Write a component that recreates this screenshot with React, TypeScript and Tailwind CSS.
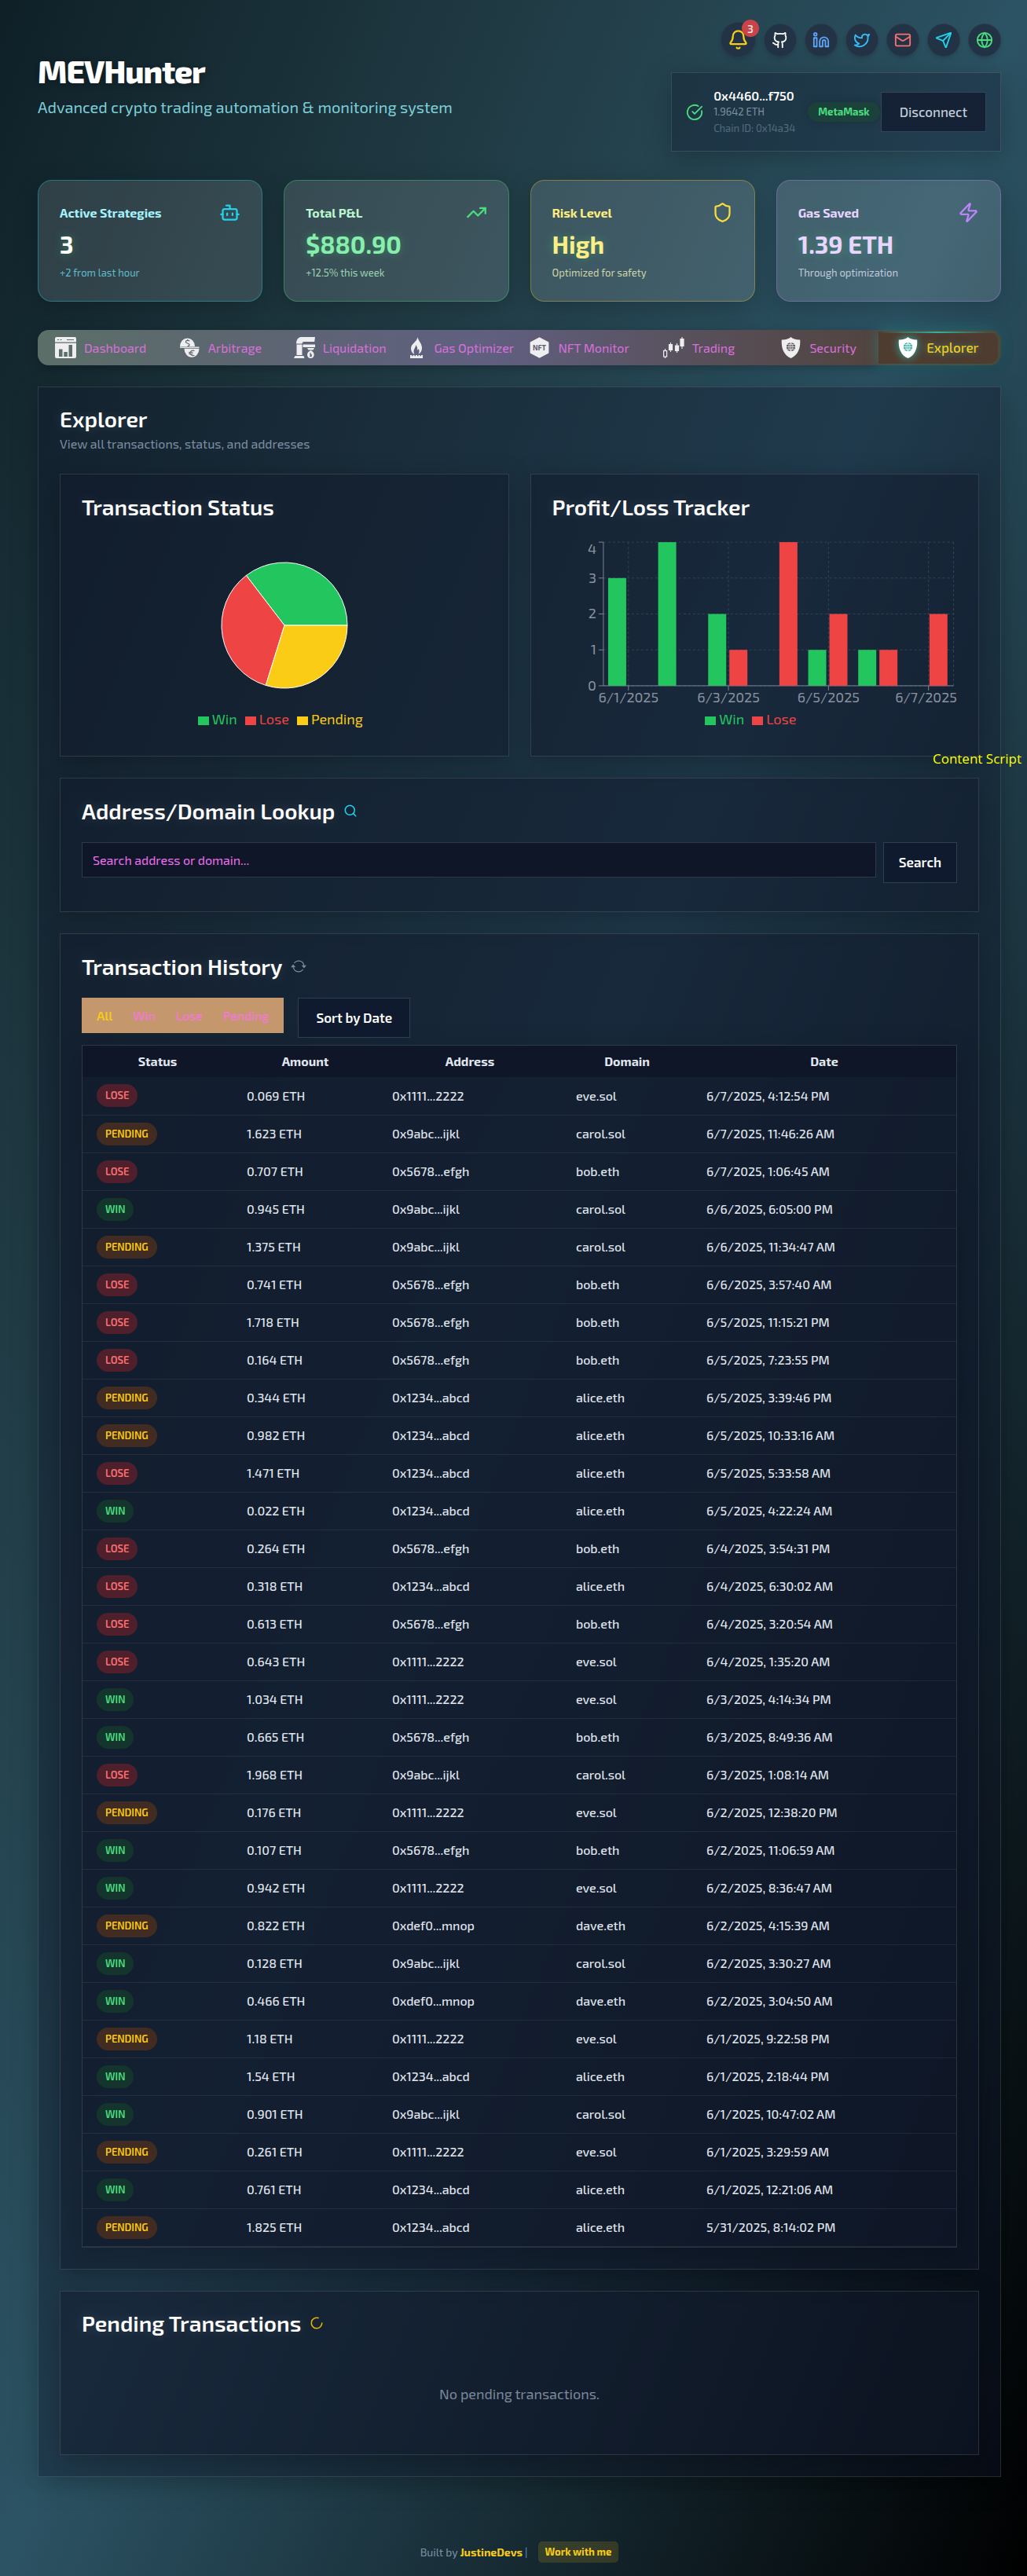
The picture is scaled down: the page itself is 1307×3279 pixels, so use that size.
import type { ReactNode } from "react";
import {
  Bell,
  Bot,
  CircleCheckBig,
  Github,
  Globe,
  Linkedin,
  LoaderCircle,
  Mail,
  Search,
  Send,
  Shield,
  TrendingUp,
  Twitter,
  Zap,
} from "lucide-react";
import { BsArrowRepeat } from "react-icons/bs";

type Status = "WIN" | "LOSE" | "PENDING";

const addresses: Record<string, string> = {
  "eve.sol": "0x1111...2222",
  "carol.sol": "0x9abc...ijkl",
  "bob.eth": "0x5678...efgh",
  "alice.eth": "0x1234...abcd",
  "dave.eth": "0xdef0...mnop",
};

const transactions: [Status, string, string, string][] = [
  ["LOSE", "0.069", "eve.sol", "6/7/2025, 4:12:54 PM"],
  ["PENDING", "1.623", "carol.sol", "6/7/2025, 11:46:26 AM"],
  ["LOSE", "0.707", "bob.eth", "6/7/2025, 1:06:45 AM"],
  ["WIN", "0.945", "carol.sol", "6/6/2025, 6:05:00 PM"],
  ["PENDING", "1.375", "carol.sol", "6/6/2025, 11:34:47 AM"],
  ["LOSE", "0.741", "bob.eth", "6/6/2025, 3:57:40 AM"],
  ["LOSE", "1.718", "bob.eth", "6/5/2025, 11:15:21 PM"],
  ["LOSE", "0.164", "bob.eth", "6/5/2025, 7:23:55 PM"],
  ["PENDING", "0.344", "alice.eth", "6/5/2025, 3:39:46 PM"],
  ["PENDING", "0.982", "alice.eth", "6/5/2025, 10:33:16 AM"],
  ["LOSE", "1.471", "alice.eth", "6/5/2025, 5:33:58 AM"],
  ["WIN", "0.022", "alice.eth", "6/5/2025, 4:22:24 AM"],
  ["LOSE", "0.264", "bob.eth", "6/4/2025, 3:54:31 PM"],
  ["LOSE", "0.318", "alice.eth", "6/4/2025, 6:30:02 AM"],
  ["LOSE", "0.613", "bob.eth", "6/4/2025, 3:20:54 AM"],
  ["LOSE", "0.643", "eve.sol", "6/4/2025, 1:35:20 AM"],
  ["WIN", "1.034", "eve.sol", "6/3/2025, 4:14:34 PM"],
  ["WIN", "0.665", "bob.eth", "6/3/2025, 8:49:36 AM"],
  ["LOSE", "1.968", "carol.sol", "6/3/2025, 1:08:14 AM"],
  ["PENDING", "0.176", "eve.sol", "6/2/2025, 12:38:20 PM"],
  ["WIN", "0.107", "bob.eth", "6/2/2025, 11:06:59 AM"],
  ["WIN", "0.942", "eve.sol", "6/2/2025, 8:36:47 AM"],
  ["PENDING", "0.822", "dave.eth", "6/2/2025, 4:15:39 AM"],
  ["WIN", "0.128", "carol.sol", "6/2/2025, 3:30:27 AM"],
  ["WIN", "0.466", "dave.eth", "6/2/2025, 3:04:50 AM"],
  ["PENDING", "1.18", "eve.sol", "6/1/2025, 9:22:58 PM"],
  ["WIN", "1.54", "alice.eth", "6/1/2025, 2:18:44 PM"],
  ["WIN", "0.901", "carol.sol", "6/1/2025, 10:47:02 AM"],
  ["PENDING", "0.261", "eve.sol", "6/1/2025, 3:29:59 AM"],
  ["WIN", "0.761", "alice.eth", "6/1/2025, 12:21:06 AM"],
  ["PENDING", "1.825", "alice.eth", "5/31/2025, 8:14:02 PM"],
];

const badgeStyles: Record<Status, string> = {
  WIN: "bg-[#14352c] text-[#4ade80]",
  LOSE: "bg-[#4f1f2b] text-[#f87171]",
  PENDING: "bg-[#422c21] text-[#facc15]",
};

const DashboardIcon = () => (
  <svg viewBox="0 0 27 27" className="size-[27px]" fill="currentColor" aria-hidden="true">
    <path
      fillRule="evenodd"
      d="M2 0h23a2 2 0 0 1 2 2v4.400H0V2a2 2 0 0 1 2-2ZM3 3v1h2V3Zm3.500 0v1h2V3ZM15 3v1h9V3ZM0 7.800h27V25a2 2 0 0 1-2 2H2a2 2 0 0 1-2-2ZM5 15.500V25h4.500v-9.500Zm6.300 3.500v6h4.500v-6Zm6.200-9v15H22V10Z"
    />
  </svg>
);

const ArbitrageIcon = () => (
  <svg viewBox="0 0 27 27" className="size-[27px]" aria-hidden="true">
    <path d="M1 12a9.500 10.500 0 0 1 19 0Z" fill="currentColor" />
    <path d="M1 13.200h24.500" stroke="currentColor" strokeWidth="1.400" />
    <path d="M6.500 14.800h19a9.500 11 0 0 1-19 0Z" fill="currentColor" />
    <path
      d="M13.200 5.200C12.500 4 8.300 4 8.300 6.200c0 2.100 4.800 1.500 4.800 3.700 0 1.200-1.300 1.700-2.600 1.700M10.600 3v1.500M19.500 17.500c-3.500-1.200-5.500 1-5.500 3s2.500 4 5.500 2.700M12 19.500h5.500M12 21.500h5.500"
      fill="none"
      stroke="#5d6770"
      strokeWidth="1.200"
    />
  </svg>
);

const LiquidationIcon = () => (
  <svg viewBox="0 0 27 27" className="size-[27px]" fill="currentColor" aria-hidden="true">
    <path d="M9 0h18l-.8 6H13c-1.600 0-2.500 1-2.500 2.500H3C3 4 5 .500 9 0ZM3.500 9.500h7V23h-7ZM1.500 24h11l1 3H0ZM11.500 9.500H27V13H11.500ZM17 14h9l-1.500 2.500h-6Z" />
    <path
      fillRule="evenodd"
      d="M21.500 17c2.500 1 4.200 3 4.200 5.500S24 27 21.300 27 17 25 17 22.500s1.800-4.500 4.500-5.500Zm-.200 2.500-1.400 2.500 1 .7-1 2.300 2.600.3.600-2.800-1.200-.6Z"
    />
  </svg>
);

const GasIcon = () => (
  <svg viewBox="0 0 27 27" className="size-[27px]" fill="currentColor" aria-hidden="true">
    <path d="M15.500 0c.5 4.500 5.500 8 5.500 14 0 3.500-1.700 6.500-4.500 8 1.300-2.500 1.400-5 .2-7-.5 1-1 1.500-1.700 1.700.5-2.700-.2-5-2-6.700.3 3.500-2.500 5-2.500 8.500 0 1.300.3 2.500 1 3.500-3-1.500-4.500-4.300-4.500-7.500C7 8.500 14.500 6.500 15.500 0ZM6 23h2v1.200h1.500V23h2v1.200H13V23h2v1.200h1.500V23h2v1.200H20V23h2v4H6Z" />
  </svg>
);

const NftIcon = () => (
  <svg viewBox="0 0 27 27" className="size-[27px]" aria-hidden="true">
    <path
      d="M13.500 1.200 24.500 7v13L13.500 25.800 2.500 20V7Z"
      fill="currentColor"
      stroke="currentColor"
      strokeWidth="1.800"
      strokeLinejoin="round"
    />
    <text x="13.500" y="16.800" textAnchor="middle" className="fill-[#5b5970] text-[9px] font-bold">
      NFT
    </text>
  </svg>
);

const TradingIcon = () => (
  <svg viewBox="0 0 27 27" className="size-[27px]" fill="none" stroke="currentColor" aria-hidden="true">
    <path d="M2.500 15v2.500M2.500 25v2M9.500 7v12M17.500 8v12M24 0v15" strokeWidth="1.100" />
    <rect x=".6" y="17.500" width="4" height="7.500" strokeWidth="1.200" />
    <path d="M9.500 9v8M17.500 10.500v7.500M24 2v10" strokeWidth="5.200" />
  </svg>
);

const ShieldGlobeIcon = ({ globe }: { globe: string }) => (
  <svg viewBox="0 0 27 27" className="size-[27px]" fill="none" aria-hidden="true">
    <path
      d="M13.500 0C16 2.200 20 3.700 25.200 3.500c.8 11-3 20-11.700 23.500C4.800 23.500 1 14.500 1.800 3.500 7 3.700 11 2.200 13.500 0Z"
      fill="currentColor"
    />
    <circle cx="13.500" cy="12.500" r="5.600" className={globe} />
    <path
      d="M13.500 7v11M8 12.500h11M9 9.700h9M9 15.300h9M13.500 7c-3.400 3-3.400 8 0 11M13.500 7c3.400 3 3.400 8 0 11"
      stroke="currentColor"
      strokeWidth=".8"
    />
  </svg>
);

const tabs: { label: string; icon: ReactNode }[] = [
  { label: "Dashboard", icon: <DashboardIcon /> },
  { label: "Arbitrage", icon: <ArbitrageIcon /> },
  { label: "Liquidation", icon: <LiquidationIcon /> },
  { label: "Gas Optimizer", icon: <GasIcon /> },
  { label: "NFT Monitor", icon: <NftIcon /> },
  { label: "Trading", icon: <TradingIcon /> },
  { label: "Security", icon: <ShieldGlobeIcon globe="fill-[#544a4c]" /> },
];

const socials: { label: string; icon: ReactNode }[] = [
  { label: "GitHub", icon: <Github className="size-[22px] text-white" /> },
  { label: "LinkedIn", icon: <Linkedin className="size-[22px] text-[#60a5fa]" /> },
  { label: "Twitter", icon: <Twitter className="size-[22px] text-[#38bdf8]" /> },
  { label: "Email", icon: <Mail className="size-[22px] text-[#f87171]" /> },
  { label: "Telegram", icon: <Send className="size-[22px] text-[#22d3ee]" /> },
  { label: "Website", icon: <Globe className="size-[22px] text-[#4ade80]" /> },
];

function StatCard(props: {
  title: string;
  value: string;
  note: string;
  icon: ReactNode;
  border: string;
  titleColor: string;
  valueColor: string;
  noteColor: string;
}) {
  return (
    <div
      className={`flex flex-col gap-[9px] rounded-[18px] border bg-white/12 p-[27px] shadow-[0_8px_32px_rgba(0,0,0,0.2)] ${props.border}`}
    >
      <div className="flex h-[27px] items-center justify-between">
        <h2 className={`text-[16px] font-bold ${props.titleColor}`}>{props.title}</h2>
        {props.icon}
      </div>
      <p
        className={`text-[31px] leading-[36px] font-bold [text-shadow:0_0_12px_rgba(74,222,128,0.35)] ${props.valueColor}`}
      >
        {props.value}
      </p>
      <p className={`text-[13px] leading-[18px] ${props.noteColor}`}>{props.note}</p>
    </div>
  );
}

function Panel({ title, icon, children }: { title: string; icon?: ReactNode; children: ReactNode }) {
  return (
    <section className="border border-white/12 bg-[#0f172a]/50 p-[27px] shadow-[0_8px_32px_rgba(0,0,0,0.25)]">
      <h2 className="mb-[27px] flex h-[27px] items-center gap-[11px] text-[28px] font-semibold text-white [text-shadow:0_0_16px_rgba(255,255,255,0.15)]">
        {title}
        {icon}
      </h2>
      {children}
    </section>
  );
}

function Legend({ items }: { items: [string, string, string][] }) {
  return (
    <ul className="flex justify-center text-[18px] leading-[27px]">
      {items.map(([label, swatch, text]) => (
        <li key={label} className={`mr-[10px] flex items-center gap-1 ${text}`}>
          <span className={`mt-[3px] h-[11px] w-[14px] ${swatch}`} />
          {label}
        </li>
      ))}
    </ul>
  );
}

const slices = [
  { share: 35.4, color: "#22c55e" },
  { share: 34.8, color: "#ef4444" },
  { share: 29.8, color: "#facc15" },
];

function PieChart() {
  let start = 0;
  return (
    <svg viewBox="0 0 164 164" className="size-[164px]" role="img" aria-label="Win, lose and pending shares">
      {slices.map((s) => {
        const end = start + (s.share / 100) * Math.PI * 2;
        const point = (a: number) => `${82 + 80 * Math.cos(a)},${82 - 80 * Math.sin(a)}`;
        const d = `M82,82L${point(start)}A80,80,0,0,0,${point(end)}Z`;
        start = end;
        return <path key={s.color} d={d} fill={s.color} stroke="#fff" />;
      })}
    </svg>
  );
}

const days: [number, number][] = [
  [3, 0],
  [4, 0],
  [2, 1],
  [0, 4],
  [1, 2],
  [1, 1],
  [0, 2],
];

function BarChart() {
  const left = 65;
  const right = 511;
  const base = 188;
  const unit = 183 / 4;
  const band = (right - left) / days.length;
  return (
    <svg viewBox="0 0 516 220" className="h-[220px] w-full" role="img" aria-label="Wins and losses per day">
      <g stroke="#334155" strokeDasharray="3 3">
        {[0, 1, 2, 3, 4].map((v) => (
          <line key={v} x1={left} x2={right} y1={base - v * unit} y2={base - v * unit} />
        ))}
        {[0.5, 2.5, 4.5, 6.5, 7].map((i) => (
          <line key={i} x1={left + i * band} x2={left + i * band} y1={5} y2={base} />
        ))}
      </g>
      <g stroke="#7b8595">
        <line x1={left} x2={left} y1={5} y2={base} />
        <line x1={left} x2={right} y1={base} y2={base} />
        {[0, 1, 2, 3, 4].map((v) => (
          <line key={v} x1={left - 6} x2={left} y1={base - v * unit} y2={base - v * unit} />
        ))}
        {[0.5, 2.5, 4.5, 6.5].map((i) => (
          <line key={i} x1={left + i * band} x2={left + i * band} y1={base} y2={base + 6} />
        ))}
      </g>
      {days.map(([win, lose], i) => (
        <g key={i}>
          <rect x={left + i * band + 6} y={base - win * unit} width={23} height={win * unit} fill="#22c55e" />
          <rect x={left + i * band + 33} y={base - lose * unit} width={23} height={lose * unit} fill="#ef4444" />
        </g>
      ))}
      <g className="fill-[#8b93a1] text-[18px]">
        {[0, 1, 2, 3, 4].map((v) => (
          <text key={v} x={left - 9} y={v === 4 ? 20 : base - v * unit + 6} textAnchor="end">
            {v}
          </text>
        ))}
        {["6/1/2025", "6/3/2025", "6/5/2025", "6/7/2025"].map((d, i) => (
          <text key={d} x={i === 3 ? 476 : left + (i * 2 + 0.5) * band} y={209} textAnchor="middle">
            {d}
          </text>
        ))}
      </g>
    </svg>
  );
}

export default function App() {
  return (
    <div className="relative flex min-h-screen flex-col bg-[linear-gradient(to_bottom_right,#0f2027_0%,#203a43_25%,#2c5364_50%,#000_100%)] pt-7 pr-[33px] pb-[18px] pl-12 font-['Exo_2','Noto_Sans',sans-serif] text-white">
      <header className="flex items-center justify-between">
        <div className="pb-1">
          <h1 className="text-[40px] leading-[45px] font-extrabold tracking-tight [text-shadow:0_2px_8px_rgba(0,0,0,0.3)]">
            MEVHunter
          </h1>
          <p className="mt-[9px] text-[20px] leading-[28px] text-[#7fcfd8]">
            Advanced crypto trading automation &amp; monitoring system
          </p>
        </div>
        <div className="flex flex-col items-end gap-[19px]">
          <div className="flex items-center gap-[10px]">
            <button
              aria-label="Notifications"
              className="relative flex size-[45px] items-center justify-center rounded-full border border-[#2b3c4c] bg-[#213344] shadow-md"
            >
              <Bell className="size-[27px] text-[#facc15]" />
              <span className="absolute -top-1 -right-[5px] flex size-[22px] items-center justify-center rounded-full bg-[#c94449] text-[14px] font-semibold text-[#e5dede]">
                3
              </span>
            </button>
            {socials.map((s) => (
              <a
                key={s.label}
                href="#"
                aria-label={s.label}
                className="flex size-[42px] items-center justify-center rounded-full border border-[#2b3c4c] bg-[#213344] shadow-md"
              >
                {s.icon}
              </a>
            ))}
          </div>
          <div className="flex items-center border border-white/12 bg-[#0f172a]/35 p-[18px] shadow-[0_8px_32px_rgba(0,0,0,0.25)]">
            <CircleCheckBig className="mr-[13px] size-[22px] text-[#4ade80]" />
            <div className="mr-[16px] leading-[21px]">
              <p className="text-[16px] font-semibold">0x4460...f750</p>
              <p className="text-[13px] text-[#7f91a3]">1.9642 ETH</p>
              <p className="text-[13px] text-[#566a80]">Chain ID: 0x14a34</p>
            </div>
            <span className="mr-px rounded-full bg-[#1a423b] px-[13px] text-[13px] leading-[25px] font-bold text-[#4ade80] shadow-[0_0_12px_rgba(0,0,0,0.2)]">
              MetaMask
            </span>
            <button className="h-[51px] border border-[#34455a] bg-[#152236] px-[23px] text-[17px] font-medium text-[#c5cedb]">
              Disconnect
            </button>
          </div>
        </div>
      </header>

      <div className="mt-9 grid grid-cols-4 gap-[27px]">
        <StatCard
          title="Active Strategies"
          value="3"
          note="+2 from last hour"
          icon={<Bot className="size-[27px] text-[#22d3ee]" />}
          border="border-[#22d3ee]/35"
          titleColor="text-[#a5f3fc]"
          valueColor="text-white"
          noteColor="text-[#5fbdcb]"
        />
        <StatCard
          title="Total P&L"
          value="$880.90"
          note="+12.5% this week"
          icon={<TrendingUp className="size-[27px] text-[#4ade80]" />}
          border="border-[#4ade80]/35"
          titleColor="text-[#bbf7d0]"
          valueColor="text-[#86efac]"
          noteColor="text-[#9fd3b5]"
        />
        <StatCard
          title="Risk Level"
          value="High"
          note="Optimized for safety"
          icon={<Shield className="size-[27px] text-[#fbdc3c]" />}
          border="border-[#facc15]/35"
          titleColor="text-[#fdee7f]"
          valueColor="text-[#fdee85]"
          noteColor="text-[#cdd5aa]"
        />
        <StatCard
          title="Gas Saved"
          value="1.39 ETH"
          note="Through optimization"
          icon={<Zap className="size-[27px] text-[#c084fc]" />}
          border="border-[#c084fc]/35"
          titleColor="text-[#e9d5ff]"
          valueColor="text-[#e9d5ff]"
          noteColor="text-[#c2cbdc]"
        />
      </div>

      <nav className="mt-9 grid h-[45px] grid-cols-8 rounded-[14px] bg-[linear-gradient(to_right,#5b6f68,#5c6670_20%,#605f80_47%,#574f58_70%,#4d3b2b)] px-1 py-0.5 shadow-[0_4px_16px_rgba(0,0,0,0.25)]">
        {tabs.map((t) => (
          <button key={t.label} className="flex items-center justify-center gap-[10px] text-[16px] whitespace-nowrap text-[#db70dd]">
            <span className="shrink-0 text-[#eeeef0]">{t.icon}</span>
            {t.label}
          </button>
        ))}
        <button
          aria-current="page"
          className="relative flex items-center justify-center gap-[10px] rounded-r-xl bg-[#4f3c30] text-[17px] font-medium whitespace-nowrap text-[#facc15] shadow-[0_0_18px_rgba(32,178,170,0.4)]"
        >
          <span className="absolute inset-x-0 top-0 h-0.5 bg-linear-to-r from-transparent via-[#2fb0a8] to-transparent" />
          <span className="shrink-0 text-white drop-shadow-[0_0_6px_#2bb5aa]">
            <ShieldGlobeIcon globe="fill-[#2aa7a0]" />
          </span>
          <span className="[text-shadow:0_0_8px_rgba(45,212,191,0.6)]">Explorer</span>
        </button>
      </nav>

      <main className="mt-[27px] border border-white/12 bg-[#0f172a]/40 p-[27px] shadow-[0_8px_32px_rgba(0,0,0,0.25)]">
        <h1 className="text-[28px] leading-[27px] font-semibold [text-shadow:0_0_16px_rgba(255,255,255,0.15)]">Explorer</h1>
        <p className="mt-1 mb-[25px] text-[16px] leading-[27px] text-[#7f8fa3]">
          View all transactions, status, and addresses
        </p>

        <div className="flex flex-col gap-[27px]">
          <div className="grid grid-cols-2 gap-[27px]">
            <Panel title="Transaction Status">
              <div className="flex h-[250px] flex-col items-center justify-end">
                <PieChart />
                <div className="mt-6 pb-1.5">
                  <Legend
                    items={[
                      ["Win", "bg-[#22c55e]", "text-[#22c55e]"],
                      ["Lose", "bg-[#ef4444]", "text-[#ef4444]"],
                      ["Pending", "bg-[#facc15]", "text-[#facc15]"],
                    ]}
                  />
                </div>
              </div>
            </Panel>
            <Panel title="Profit/Loss Tracker">
              <div className="h-[250px]">
                <BarChart />
                <div className="-mt-[3px]">
                  <Legend
                    items={[
                      ["Win", "bg-[#22c55e]", "text-[#22c55e]"],
                      ["Lose", "bg-[#ef4444]", "text-[#ef4444]"],
                    ]}
                  />
                </div>
              </div>
            </Panel>
          </div>

          <Panel title="Address/Domain Lookup" icon={<Search className="size-[18px] text-[#22d3ee]" />}>
            <form className="mb-[9px] flex items-start gap-[9px]">
              <input
                type="text"
                aria-label="Search address or domain"
                placeholder="Search address or domain..."
                className="h-[45px] min-w-0 flex-1 border border-[#2b394b] bg-[#0e1628] px-[13px] text-[16px] placeholder:text-[#f06ff0] placeholder:opacity-100"
              />
              <button
                type="button"
                className="h-[52px] border border-[#2f3f52] bg-[#101a2e] px-[19px] text-[17px] font-semibold"
              >
                Search
              </button>
            </form>
          </Panel>

          <Panel title="Transaction History" icon={<BsArrowRepeat className="size-5 text-[#7b8a9e]" />}>
            <div className="mb-[9px] flex items-start gap-[18px]">
              <div className="flex h-[45px] items-center bg-[#c4976c] px-[6px] text-[16px] text-[#fb73ea]">
                <button className="px-[13px] font-semibold text-[#f6cb17]">All</button>
                <button className="px-[13px]">Win</button>
                <button className="px-[13px]">Lose</button>
                <button className="px-[13px]">Pending</button>
              </div>
              <button className="h-[51px] border border-[#2f3f52] bg-[#101a2e] px-[22px] text-[17px] font-semibold">
                Sort by Date
              </button>
            </div>
            <div className="border border-white/12 bg-[#0f172a]/50 shadow-[0_8px_32px_rgba(0,0,0,0.2)]">
              <table className="w-full table-fixed border-collapse text-[16px] text-[#e2e8f0]">
                <thead>
                  <tr className="h-10 bg-[#0e1628]">
                    <th className="w-[191px] font-bold">Status</th>
                    <th className="w-[185px] font-bold">Amount</th>
                    <th className="w-[234px] font-bold">Address</th>
                    <th className="w-[166px] font-bold">Domain</th>
                    <th className="font-bold">Date</th>
                  </tr>
                </thead>
                <tbody className="font-medium">
                  {transactions.map(([status, amount, domain, date]) => (
                    <tr key={date} className="h-12 border-b border-white/7">
                      <td className="px-[18px]">
                        <span
                          className={`inline-block rounded-full px-[11px] align-middle text-[13px] leading-[29px] font-semibold ${badgeStyles[status]}`}
                        >
                          {status}
                        </span>
                      </td>
                      <td className="px-[18px]">{amount} ETH</td>
                      <td className="px-[18px]">{addresses[domain]}</td>
                      <td className="px-[18px]">{domain}</td>
                      <td className="px-[18px]">{date}</td>
                    </tr>
                  ))}
                </tbody>
              </table>
            </div>
          </Panel>

          <Panel title="Pending Transactions" icon={<LoaderCircle className="size-[18px] text-[#eab308]" />}>
            <p className="py-9 text-center text-[18px] leading-[27px] text-[#7b899c]">No pending transactions.</p>
          </Panel>
        </div>
      </main>

      <footer className="mt-[82px] flex items-center justify-center text-[14px] text-[#7d93a8]">
        <span>
          Built by{" "}
          <a href="#" className="font-bold text-[#facc15]">
            JustineDevs
          </a>{" "}
          <span className="text-[#5b9bd5]">|</span>
        </span>
        <a href="#" className="ml-[13px] rounded-[5px] bg-[#facc15]/15 px-[9px] text-[13px] leading-[27px] font-bold text-[#facc15]">
          Work with me
        </a>
      </footer>

      <div className="absolute top-[953px] right-[7px] font-['Open_Sans',sans-serif] text-[17px] leading-[26px] text-[#ffff00]">
        Content Script
      </div>
    </div>
  );
}
